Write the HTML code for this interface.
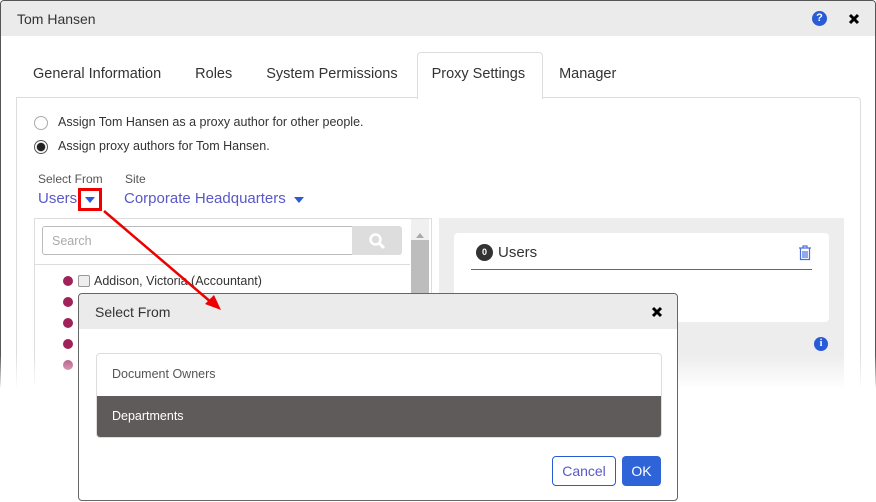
<!DOCTYPE html>
<html><head><style>
*{box-sizing:border-box;margin:0;padding:0}
body{width:876px;height:502px;overflow:hidden;background:#fff;font-family:"Liberation Sans",sans-serif;color:#333;position:relative}
.abs{position:absolute}
</style></head><body>
<div class="abs" style="left:0;top:0;width:876px;height:392px;border:1px solid #555;border-bottom:none;border-radius:4px 4px 0 0;background:#fff;overflow:hidden">
 <div class="abs" style="left:0;top:0;width:874px;height:35px;background:#ebebeb"></div>
 <div class="abs" style="left:16px;top:10px;font-size:14px;color:#333">Tom Hansen</div>
 <div class="abs" style="left:811px;top:10px;width:15px;height:15px;border-radius:50%;background:#2a5bd7;color:#fff;font-size:11px;font-weight:bold;text-align:center;line-height:15px">?</div>
 <svg class="abs" style="left:847px;top:12px" width="12" height="12"><path d="M2 2L10 10M10 2L2 10" stroke="#000" stroke-width="3"/></svg>
 <div class="abs" style="left:416px;top:51px;width:126px;height:47px;border:1px solid #ddd;border-bottom:none;border-radius:4px 4px 0 0;background:#fff;z-index:2"></div>
 <div class="abs" style="left:15px;top:96px;width:845px;height:320px;border:1px solid #ddd;border-radius:0 4px 0 0"></div>
 <div class="abs" style="top:65px;left:32px;font-size:14.5px;color:#333;z-index:3;white-space:nowrap">General Information<span style="margin-left:34px">Roles</span><span style="margin-left:34px">System Permissions</span><span style="margin-left:34px">Proxy Settings</span><span style="margin-left:34px">Manager</span></div>
 <div class="abs" style="left:33px;top:115px;width:14px;height:14px;border:1px solid #aaa;border-radius:50%"></div>
 <div class="abs" style="left:57px;top:114px;font-size:12.5px">Assign Tom Hansen as a proxy author for other people.</div>
 <div class="abs" style="left:33px;top:139px;width:14px;height:14px;border:1px solid #555;border-radius:50%;background:radial-gradient(#222 45%,#fff 55%)"></div>
 <div class="abs" style="left:57px;top:138px;font-size:12.5px">Assign proxy authors for Tom Hansen.</div>
 <div class="abs" style="left:37px;top:171px;font-size:12px;color:#555">Select From</div>
 <div class="abs" style="left:124px;top:171px;font-size:12px;color:#555">Site</div>
 <div class="abs" style="left:37px;top:189px;font-size:15px;color:#5a58c8">Users</div>
 <div class="abs" style="left:77px;top:187px;width:24px;height:23px;border:3px solid #e00"></div>
 <div class="abs" style="left:84px;top:196px;border:5px solid transparent;border-top:6px solid #2a5bd7"></div>
 <div class="abs" style="left:123px;top:189px;font-size:15px;color:#5a58c8">Corporate Headquarters</div>
 <div class="abs" style="left:293px;top:196px;border:5px solid transparent;border-top:6px solid #2a5bd7"></div>
 <div class="abs" style="left:33px;top:217px;width:398px;height:190px;border:1px solid #ddd"></div>
 <div class="abs" style="left:41px;top:225px;width:311px;height:29px;border:1px solid #bbb;border-radius:3px 0 0 3px;font-size:12.5px;color:#aaa;padding:7px 9px">Search</div>
 <div class="abs" style="left:351px;top:225px;width:50px;height:29px;background:#ddd;border-radius:0 3px 3px 0"></div>
 <svg class="abs" style="left:367px;top:231px" width="18" height="18"><circle cx="7.5" cy="7.5" r="5" fill="none" stroke="#fff" stroke-width="2.5"/><line x1="11" y1="11" x2="16" y2="16" stroke="#fff" stroke-width="3"/></svg>
 <div class="abs" style="left:34px;top:263px;width:375px;height:1px;background:#ddd"></div>
 <div class="abs" style="left:410px;top:218px;width:18px;height:190px;background:#f0f0f0"></div>
 <div class="abs" style="left:415px;top:228px;border:4px solid transparent;border-bottom:5px solid #aaa"></div>
 <div class="abs" style="left:410px;top:239px;width:18px;height:170px;background:#bdbdbd"></div>
 <div class="abs" style="left:62px;top:275px;width:10px;height:10px;border-radius:50%;background:#a0225a"></div>
 <div class="abs" style="left:77px;top:274px;width:12px;height:12px;border:1px solid #999;border-radius:2px;background:#eee"></div>
 <div class="abs" style="left:93px;top:273px;font-size:12.5px">Addison, Victoria (Accountant)</div>
 <div class="abs" style="left:62px;top:296px;width:10px;height:10px;border-radius:50%;background:#a0225a"></div>
 <div class="abs" style="left:62px;top:317px;width:10px;height:10px;border-radius:50%;background:#a0225a"></div>
 <div class="abs" style="left:62px;top:338px;width:10px;height:10px;border-radius:50%;background:#a0225a"></div>
 <div class="abs" style="left:62px;top:359px;width:10px;height:10px;border-radius:50%;background:#b04a78"></div>
 <div class="abs" style="left:438px;top:217px;width:405px;height:190px;background:#ededed"></div>
 <div class="abs" style="left:453px;top:232px;width:375px;height:89px;background:#fff;border-radius:4px"></div>
 <div class="abs" style="left:475px;top:243px;width:17px;height:17px;border-radius:50%;background:#333;color:#fff;font-size:9px;font-weight:bold;text-align:center;line-height:17px">0</div>
 <div class="abs" style="left:497px;top:243px;font-size:15px;color:#333">Users</div>
 <svg class="abs" style="left:797px;top:244px" width="14" height="16"><path d="M1 3h12M5 3V1h4v2M2.5 3.5v11h9v-11M5 6v7M7 6v7M9 6v7" fill="none" stroke="#4a6fe0" stroke-width="1.2"/></svg>
 <div class="abs" style="left:470px;top:268px;width:341px;height:1px;background:#666"></div>
 <div class="abs" style="left:813px;top:336px;width:14px;height:14px;border-radius:50%;background:#2a5bd7;color:#fff;font-size:10px;font-weight:bold;text-align:center;line-height:14px;font-family:'Liberation Serif',serif">i</div>
</div>
<div class="abs" style="left:0;top:355px;width:876px;height:40px;background:linear-gradient(rgba(255,255,255,0),#fff 85%)"></div>
<div class="abs" style="left:78px;top:293px;width:600px;height:208px;border:1px solid #666;border-radius:4px;background:#fff">
 <div class="abs" style="left:0;top:0;width:598px;height:35px;background:#ebebeb;border-radius:4px 4px 0 0"></div>
 <div class="abs" style="left:16px;top:10px;font-size:14px;color:#333">Select From</div>
 <svg class="abs" style="left:572px;top:12px" width="12" height="12"><path d="M2 2L10 10M10 2L2 10" stroke="#000" stroke-width="3"/></svg>
 <div class="abs" style="left:17px;top:59px;width:566px;height:85px;border:1px solid #ddd;border-radius:4px;overflow:hidden">
  <div style="height:42px;padding:13px 15px;font-size:12.5px;color:#555">Document Owners</div>
  <div style="height:42px;padding:13px 15px;font-size:12.5px;color:#fff;background:#5f5b5a">Departments</div>
 </div>
 <div class="abs" style="left:473px;top:162px;width:64px;height:30px;border:1px solid #2a5bd7;border-radius:4px;color:#5a58c8;font-size:14px;text-align:center;line-height:28px">Cancel</div>
 <div class="abs" style="left:543px;top:162px;width:39px;height:30px;background:#2f63d8;border-radius:4px;color:#fff;font-size:14px;text-align:center;line-height:30px">OK</div>
</div>
<svg class="abs" style="left:0;top:0" width="876" height="502"><line x1="104" y1="211" x2="212" y2="303" stroke="#e00" stroke-width="2.5"/><polygon points="221,310 205,304 214,295" fill="#e00"/></svg>
</body></html>
